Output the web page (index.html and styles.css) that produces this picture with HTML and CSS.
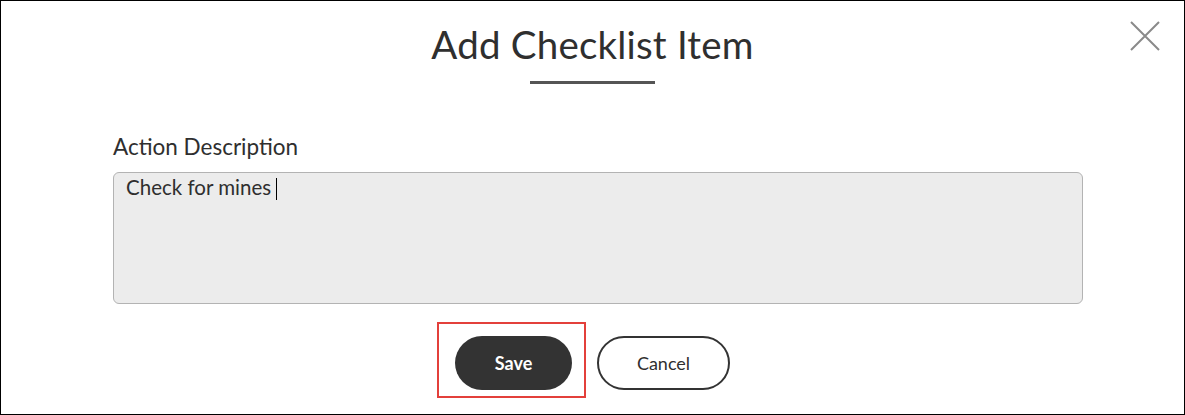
FILE: index.html
```html
<!DOCTYPE html>
<html>
<head>
<meta charset="utf-8">
<link rel="stylesheet" href="styles.css">
</head>
<body>
<div class="dialog">
  <button class="close" aria-label="Close">
    <svg width="32" height="32" viewBox="0 0 32 32"><path d="M2 2 L30 30 M30 2 L2 30" stroke="#8a8a8a" stroke-width="2" fill="none"/></svg>
  </button>
  <h1 class="title">Add Checklist Item</h1>
  <div class="rule"></div>
  <div class="form">
    <label class="label">Action Description</label>
    <div class="textarea">Check for mines<span class="caret"></span></div>
  </div>
  <div class="actions">
    <div class="save-wrap">
      <span class="highlight"></span>
      <button class="btn btn-save">Save</button>
    </div>
    <button class="btn btn-cancel">Cancel</button>
  </div>
</div>
</body>
</html>
```
FILE: styles.css
```css
html, body {
  margin: 0;
  padding: 0;
  background: #fff;
}
.dialog {
  position: relative;
  box-sizing: border-box;
  width: 1185px;
  height: 415px;
  border: 1px solid #000;
  font-family: Lato, "Open Sans", sans-serif;
  color: #2f2f2f;
  display: flex;
  flex-direction: column;
  align-items: center;
}
.close {
  position: absolute;
  top: 19px;
  right: 23px;
  width: 32px;
  height: 32px;
  padding: 0;
  border: 0;
  background: none;
}
.close svg { display: block; }
.title {
  margin: 19px 0 0;
  font-size: 38.5px;
  font-weight: 400;
  line-height: 48px;
  letter-spacing: 0.2px;
  color: #2f2f2f;
}
.rule {
  width: 125px;
  height: 3px;
  background: #555;
  margin-top: 13px;
}
.form {
  align-self: flex-start;
  margin-left: 112px;
  margin-top: 49px;
  width: 970px;
  display: flex;
  flex-direction: column;
}
.label {
  font-size: 22.5px;
  line-height: 27px;
  color: #2f2f2f;
}
.textarea {
  margin-top: 12px;
  box-sizing: border-box;
  height: 132px;
  background: #ececec;
  border: 1px solid #b3b3b3;
  border-radius: 6px;
  padding: 2px 12px;
  font-size: 20.5px;
  line-height: 25px;
  color: #2f2f2f;
}
.caret {
  display: inline-block;
  width: 1px;
  height: 22px;
  background: #000;
  margin-left: 5px;
  vertical-align: -5px;
}
.actions {
  margin-top: 32px;
  display: flex;
  gap: 25px;
}
.save-wrap {
  position: relative;
}
.highlight {
  position: absolute;
  left: -18px;
  top: -14px;
  width: 145px;
  height: 72px;
  border: 2px solid #e3403b;
}
.btn {
  height: 54px;
  border-radius: 27px;
  font-family: Lato, "Open Sans", sans-serif;
  font-size: 18px;
  padding: 0;
  display: block;
}
.btn-save {
  width: 117px;
  background: #333;
  color: #fff;
  border: 0;
  font-weight: 700;
}
.btn-cancel {
  width: 133px;
  background: #fff;
  color: #2f2f2f;
  border: 2px solid #333;
}
```
